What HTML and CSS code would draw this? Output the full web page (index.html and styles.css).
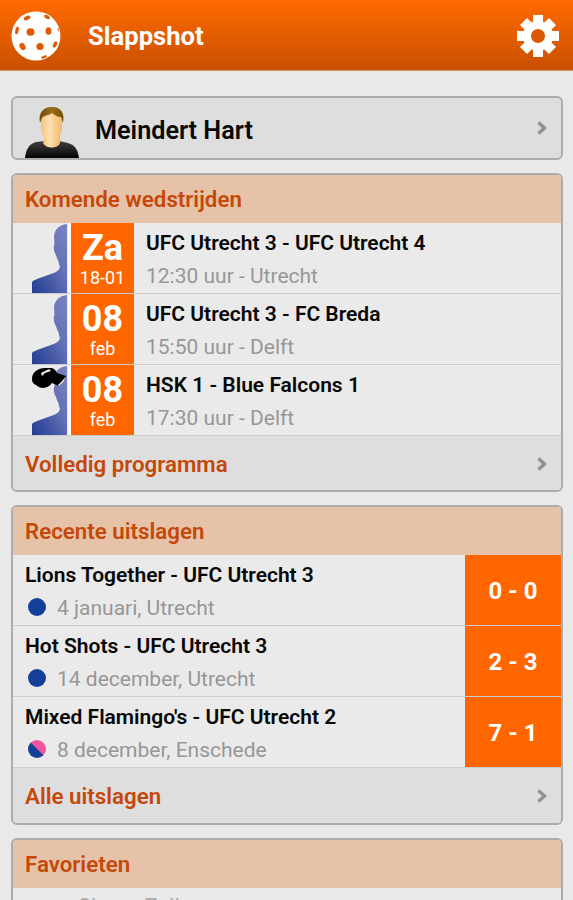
FILE: index.html
```html
<!DOCTYPE html>
<html lang="nl">
<head>
  <meta charset="UTF-8" />
  <meta name="viewport" content="width=device-width, initial-scale=1.0" />
  <title>Slappshot</title>
  <link rel="stylesheet" href="styles.css">
</head>
<body>
  <!-- shared shapes -->
  <svg class="defs" width="0" height="0">
    <defs>
      <linearGradient id="blue" x1="0" y1="1" x2="1" y2="0">
        <stop offset="0" stop-color="#243f96" />
        <stop offset="0.3" stop-color="#4055a2" />
        <stop offset="0.6" stop-color="#6672b7" />
        <stop offset="1" stop-color="#7c83c2" />
      </linearGradient>
      <symbol id="player" viewBox="0 0 56 70">
        <path fill="url(#blue)" d="M54 1C46 2 42 6 41 13L41.5 21C40 24 41 29 43 32C44 36 46 38 46 41L47 44C46 48 43 49 38 51L24 56C20 58 19 58 19 60V70H54Z" />
      </symbol>
      <symbol id="arrow" viewBox="0 0 10 14">
        <path fill="none" stroke="#919191" stroke-width="3.4" d="M1.5 1.5L7.5 7L1.5 12.5" />
      </symbol>
    </defs>
  </svg>

  <header class="topbar">
    <svg class="ball" viewBox="0 0 50 50">
      <circle cx="25" cy="25" r="24.5" fill="#fff" />
      <g fill="#de5a04">
        <ellipse cx="19.5" cy="21" rx="4" ry="3.8" />
        <ellipse cx="37.5" cy="20" rx="3" ry="3.8" />
        <ellipse cx="11.5" cy="35.5" rx="2.8" ry="3.8" transform="rotate(-28 11.5 35.5)" />
        <ellipse cx="29" cy="35.5" rx="3.6" ry="3.5" />
        <ellipse cx="16" cy="7" rx="3.6" ry="2" transform="rotate(-25 16 7)" />
        <ellipse cx="36" cy="6" rx="3.2" ry="1.8" transform="rotate(28 36 6)" />
        <ellipse cx="6" cy="19.5" rx="1.7" ry="3.8" transform="rotate(12 6 19.5)" />
        <ellipse cx="44" cy="33.5" rx="1.8" ry="3.4" transform="rotate(25 44 33.5)" />
        <ellipse cx="33" cy="46" rx="3" ry="1.3" transform="rotate(-20 33 46)" />
        <ellipse cx="47.3" cy="18.5" rx=".8" ry="2.2" opacity=".6" />
      </g>
    </svg>
    <h1>Slappshot</h1>
    <svg class="gear" viewBox="-21 -21 42 42">
      <g fill="#fff">
        <rect x="-5" y="-21" width="10" height="42" />
        <rect x="-21" y="-5" width="42" height="10" />
        <rect x="-5" y="-20.5" width="10" height="41" transform="rotate(45)" />
        <rect x="-5" y="-20.5" width="10" height="41" transform="rotate(-45)" />
        <circle r="15" />
      </g>
      <circle r="7" fill="#d95703" />
    </svg>
  </header>

  <main>
    <a class="card profile">
      <svg class="avatar" viewBox="0 0 54 52">
        <defs>
          <linearGradient id="shirt" x1="0" y1="0" x2="0" y2="1">
            <stop offset="0" stop-color="#404040" />
            <stop offset="1" stop-color="#050505" />
          </linearGradient>
          <linearGradient id="skin" x1="0" y1="0" x2="1" y2="0">
            <stop offset="0" stop-color="#f4c27a" />
            <stop offset="0.4" stop-color="#ffe0b2" />
            <stop offset="1" stop-color="#f0b867" />
          </linearGradient>
          <linearGradient id="hair" x1="0" y1="0" x2="1" y2="0">
            <stop offset="0" stop-color="#6f4b0b" />
            <stop offset="0.5" stop-color="#9a6b18" />
            <stop offset="1" stop-color="#755008" />
          </linearGradient>
        </defs>
        <path fill="url(#shirt)" d="M0 52C1 43 4 38 11 36L20 35H34L43 37C50 39 53 44 54 52Z" />
        <path fill="url(#skin)" d="M19 30H35V37C33 43 21 43 18 37L19 34Z" />
        <path fill="url(#skin)" d="M16 12C16 5 37 5 37 12L37 22C36 30 32 36 27 36C21 36 17 30 16 22Z" />
        <path fill="url(#hair)" d="M15 17C13 7 18 1 27 1C36 1 40 7 38 17L36 11C32 11 30 9 27 7C23 10 19 9 17 12Z" />
      </svg>
      <span class="name">Meindert Hart</span>
      <svg class="arrow"><use href="#arrow" /></svg>
    </a>

    <section class="card">
      <h2>Komende wedstrijden</h2>
      <div class="row">
        <div class="role"><svg class="player"><use href="#player" /></svg></div>
        <div class="date"><b>Za</b><span>18-01</span></div>
        <div class="match">
          <h3>UFC Utrecht 3 - UFC Utrecht 4</h3>
          <p>12:30 uur - Utrecht</p>
        </div>
      </div>
      <div class="row">
        <div class="role"><svg class="player"><use href="#player" /></svg></div>
        <div class="date"><b>08</b><span>feb</span></div>
        <div class="match">
          <h3>UFC Utrecht 3 - FC Breda</h3>
          <p>15:50 uur - Delft</p>
        </div>
      </div>
      <div class="row">
        <div class="role">
          <svg class="player"><use href="#player" /></svg>
          <svg class="whistle" viewBox="0 0 35 22">
            <path d="M0 12C0 5 6 1 13 1L20 1C23 2 24 4 25 6L34 9L31 14L27 19L20 16C17 21 9 23 4 18C1 17 0 15 0 12Z" />
            <path fill="#eee" d="M9 6L17 2L19 4L13 6L10 9ZM26 18L31 13L33 10L32 14L27 19Z" />
          </svg>
        </div>
        <div class="date"><b>08</b><span>feb</span></div>
        <div class="match">
          <h3>HSK 1 - Blue Falcons 1</h3>
          <p>17:30 uur - Delft</p>
        </div>
      </div>
      <a class="more">Volledig programma <svg class="arrow"><use href="#arrow" /></svg></a>
    </section>

    <section class="card">
      <h2>Recente uitslagen</h2>
      <div class="row">
        <div class="match result">
          <h3>Lions Together - UFC Utrecht 3</h3>
          <p><i class="dot"></i>4 januari, Utrecht</p>
        </div>
        <div class="score">0 - 0</div>
      </div>
      <div class="row">
        <div class="match result">
          <h3>Hot Shots - UFC Utrecht 3</h3>
          <p><i class="dot"></i>14 december, Utrecht</p>
        </div>
        <div class="score">2 - 3</div>
      </div>
      <div class="row">
        <div class="match result">
          <h3>Mixed Flamingo's - UFC Utrecht 2</h3>
          <p><i class="dot mixed"></i>8 december, Enschede</p>
        </div>
        <div class="score">7 - 1</div>
      </div>
      <a class="more">Alle uitslagen <svg class="arrow"><use href="#arrow" /></svg></a>
    </section>

    <section class="card favorites">
      <h2>Favorieten</h2>
      <div class="row favorite">Shane Zeller</div>
    </section>
  </main>
</body>
</html>
```

FILE: styles.css
```css
* {
  box-sizing: border-box;
}

body {
  margin: 0;
  height: 900px;
  overflow: hidden;
  font-family: Roboto, sans-serif;
  background: #e9e9e9;
  color: #080808;
}

h1, h2, h3, p {
  margin: 0;
}

svg {
  display: block;
  flex-shrink: 0;
}

.defs {
  height: 0;
}

.topbar {
  display: flex;
  align-items: center;
  height: 71px;
  padding: 1px 14px 0 11px;
  background: linear-gradient(#ff6a00, #c85000);
  border-bottom: 1px solid #d9976c;
}

.topbar h1 {
  flex: 1;
  margin-left: 27px;
  font-size: 25.6px;
  font-weight: 700;
  color: #fff;
}

.ball {
  width: 50px;
  height: 50px;
}

.gear {
  width: 42px;
  height: 42px;
}

main {
  display: flex;
  flex-direction: column;
  gap: 13px;
  padding: 25px 10px 0 11px;
}

.card {
  flex-shrink: 0;
  border: 2px solid #acacac;
  border-radius: 6px;
  background: #eaeaea;
  overflow: hidden;
}

.profile {
  display: flex;
  align-items: center;
  height: 64px;
  padding: 0 14px 0 12px;
  background: #dedede;
}

.avatar {
  width: 54px;
  height: 52px;
  align-self: flex-end;
}

.name {
  flex: 1;
  margin-left: 16px;
  padding-top: 4px;
  font-size: 25.2px;
  font-weight: 600;
}

.arrow {
  width: 10px;
  height: 14px;
}

.card h2 {
  height: 48px;
  padding-left: 12px;
  font-size: 22.3px;
  font-weight: 600;
  line-height: 49px;
  color: #c54808;
  background: #e6c3a8;
}

.row {
  display: flex;
  height: 71px;
  border-bottom: 1px solid #ccc;
}

.role {
  position: relative;
  width: 58px;
  padding-right: 3px;
  border-right: 3px solid #fafafa;
}

.player {
  width: 56px;
  height: 70px;
}

.whistle {
  position: absolute;
  left: 19px;
  top: 2px;
  width: 35px;
  height: 22px;
}

.date {
  display: flex;
  flex-direction: column;
  align-items: center;
  width: 63px;
  padding-top: 4px;
  color: #fff;
  background: #ff6600;
}

.date b {
  font-size: 36px;
  line-height: 42px;
}

.date span {
  font-size: 18px;
  line-height: 18px;
}

.match {
  flex: 1;
  padding: 7px 0 0 12px;
}

.match h3 {
  font-size: 21px;
  font-weight: 600;
  line-height: 26px;
}

.match p {
  display: flex;
  align-items: center;
  padding-top: 7px;
  font-size: 21px;
  line-height: 26px;
  color: #979797;
}

.dot {
  width: 18px;
  height: 18px;
  margin: 0 11px 2px 3px;
  border-radius: 50%;
  background: #143f99;
}

.dot.mixed {
  background: linear-gradient(45deg, #143f99 49%, #ee559c 52%);
}

.score {
  width: 96px;
  font-size: 24px;
  font-weight: 700;
  line-height: 72px;
  text-align: center;
  color: #fff;
  background: #ff6600;
}

.more {
  display: flex;
  align-items: center;
  justify-content: space-between;
  height: 54.3px;
  padding: 2px 14px 0 12px;
  font-size: 22.3px;
  font-weight: 600;
  color: #c54808;
  background: #dedede;
}

/* the last card runs on below the screen */
.favorites {
  height: 62px;
  border-bottom: 0;
  border-bottom-left-radius: 0;
  border-bottom-right-radius: 0;
}

.favorite {
  padding: 4px 0 0 65px;
  font-size: 22px;
  line-height: 30px;
  color: #aaa;
}
```
